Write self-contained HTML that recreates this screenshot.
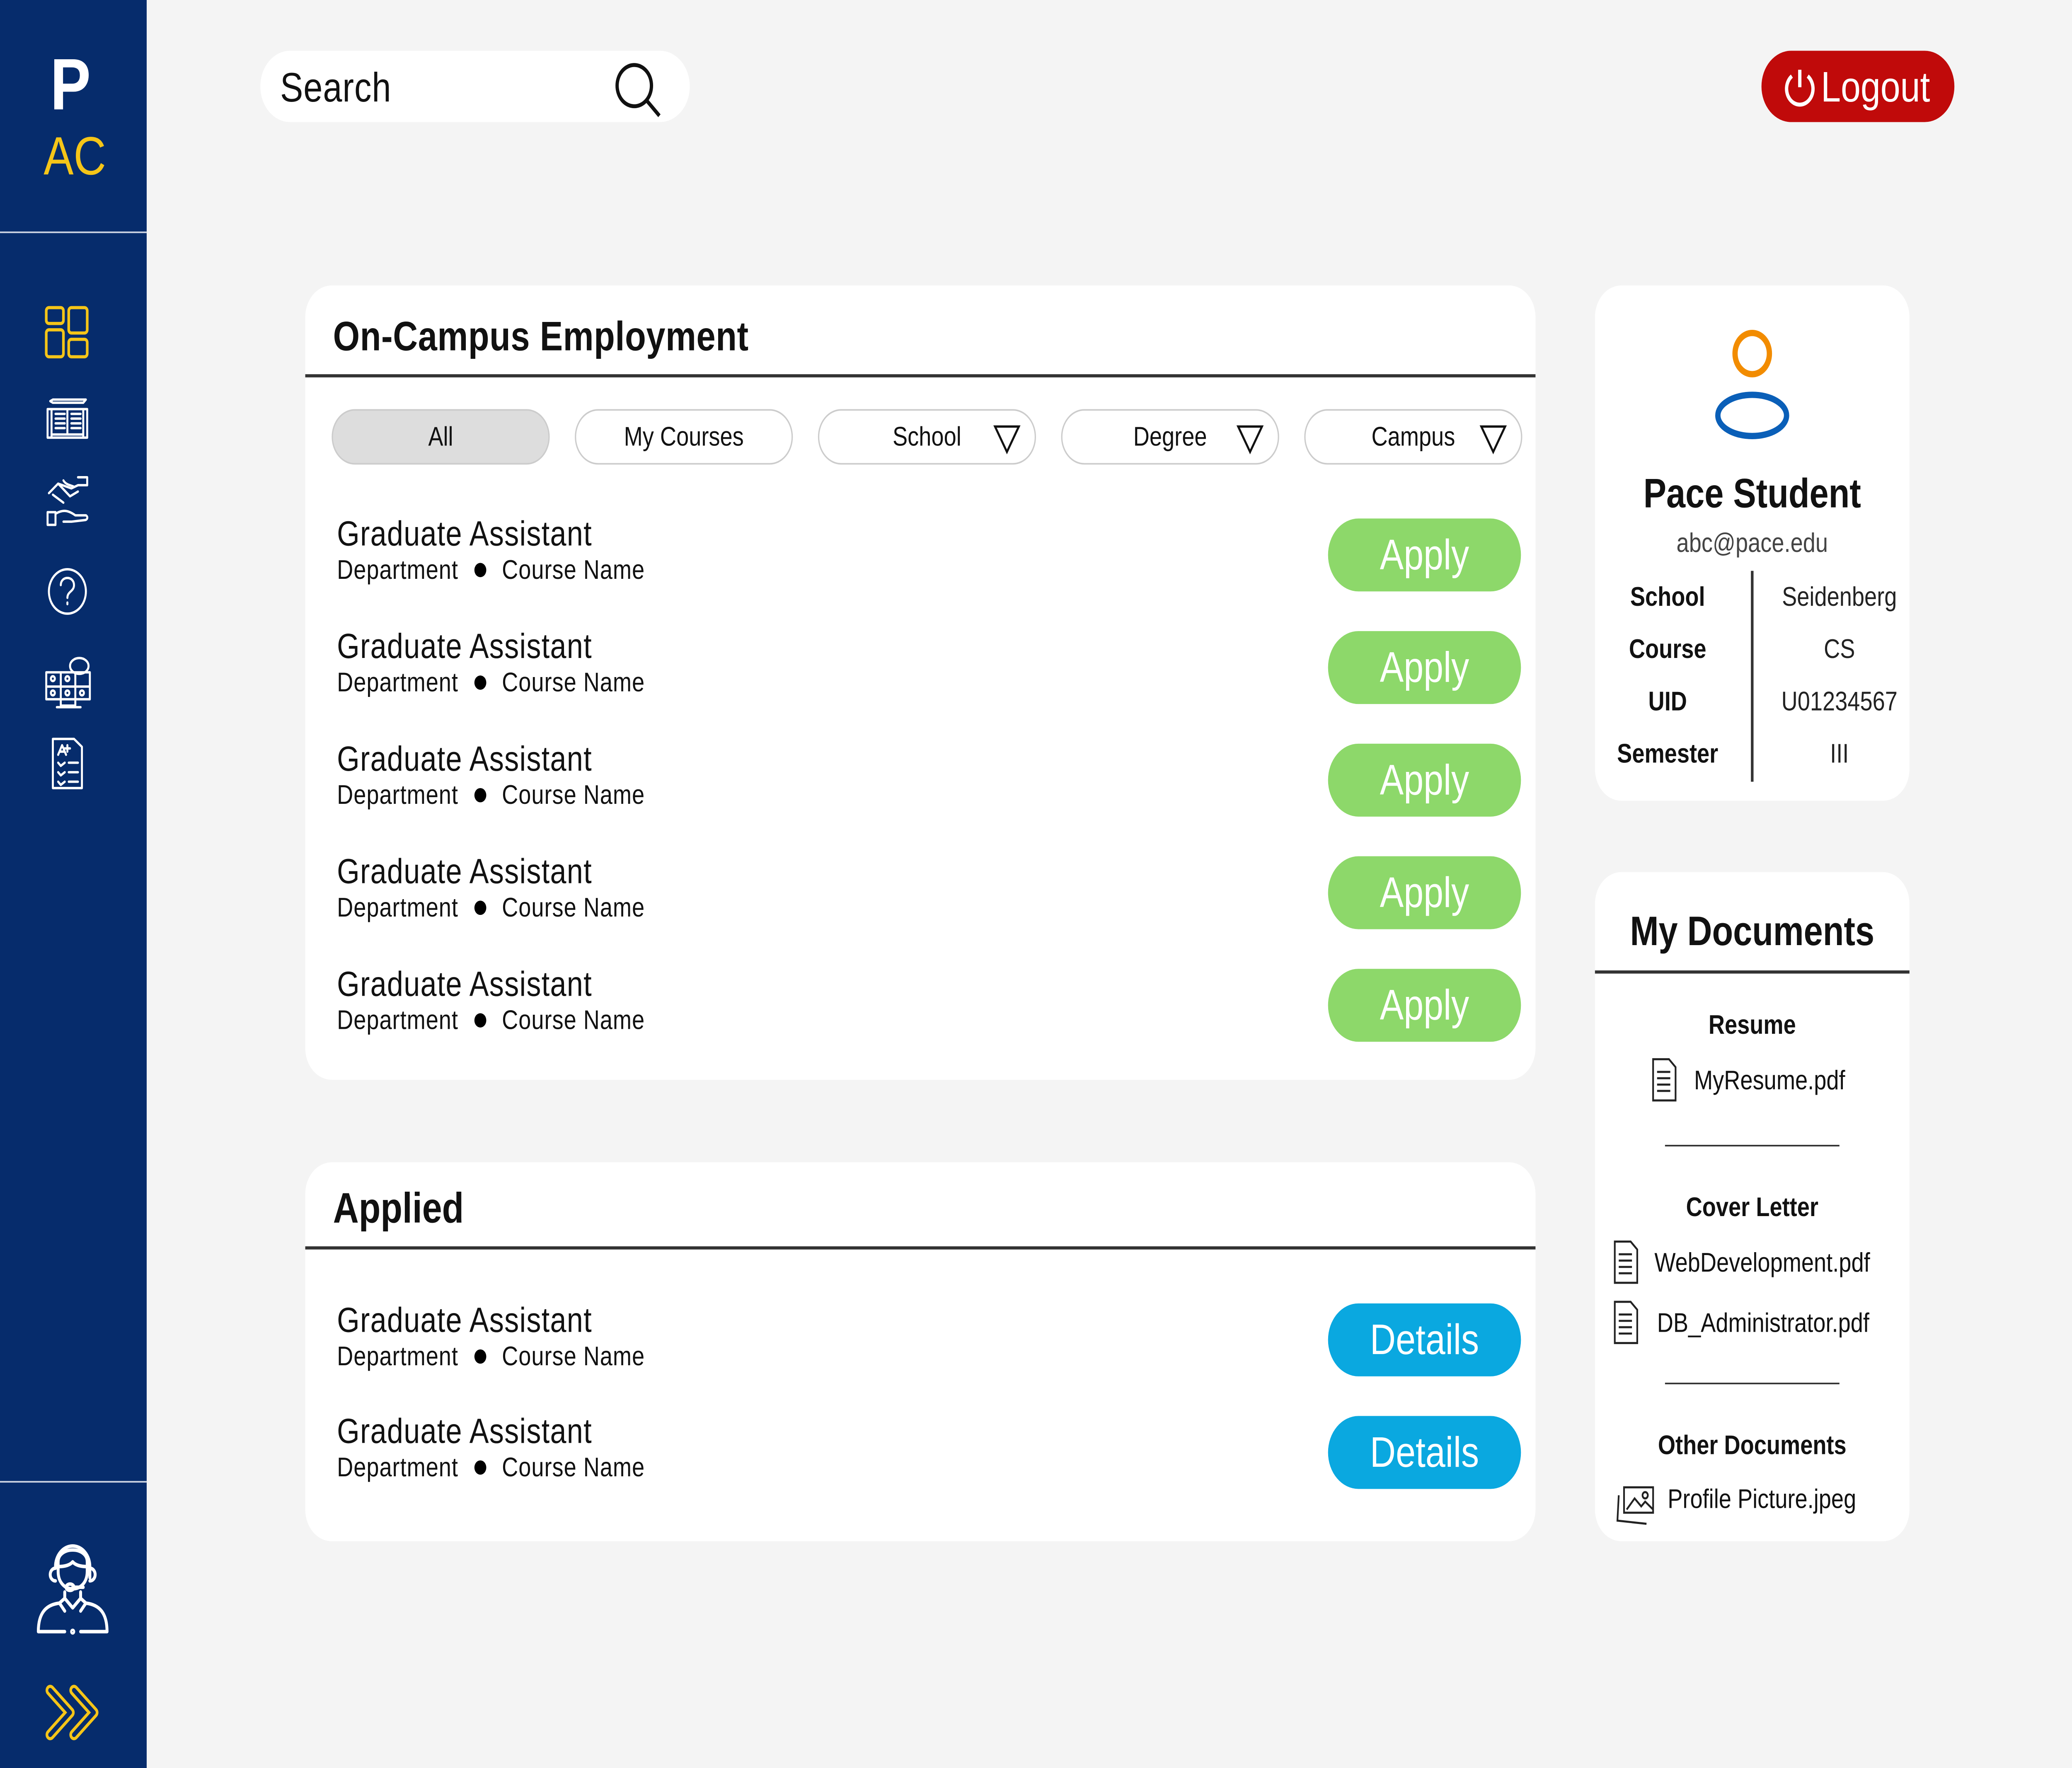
<!DOCTYPE html>
<html><head><meta charset="utf-8">
<style>
*{margin:0;padding:0;box-sizing:border-box}
html,body{width:100%;height:100%;overflow:hidden;background:#f4f4f4}
#w{position:absolute;left:0;top:0;width:1568px;height:1115px;transform:scale(3.8265);transform-origin:0 0;font-family:"Liberation Sans",Arial,sans-serif;color:#111}
.a{position:absolute}
.card{position:absolute;background:#fff;border-radius:20px}
.pill{position:absolute;width:165px;height:35px;border:1px solid #ccc;border-radius:18px;background:#fff;font-size:17px;line-height:33px;text-align:center}
.t{position:absolute;left:24px;font-size:22px;line-height:24px;letter-spacing:.4px}
.s{position:absolute;left:24px;font-size:17px;line-height:20px;letter-spacing:.3px}
.s b{display:inline-block;width:9px;height:9px;border-radius:50%;background:#000;margin:0 12px 1px 12px}
.btn{position:absolute;left:774px;width:146px;height:46px;border-radius:23px;color:#fff;font-size:27px;line-height:46px;text-align:center}
.g{background:#8dd86a}.bl{background:#0aa8e0}
.c{position:absolute;text-align:center;width:238px;left:0}
</style></head><body><div id="w">
<div class="a" style="left:0;top:0;width:111px;height:1115px;background:#062c6c"></div>
<div class="a" style="left:38px;top:28px;color:#fff;font-weight:bold;font-size:46px;line-height:50px">P</div>
<div class="a" style="left:33px;top:80px;color:#f5c518;font-size:34px;line-height:38px">AC</div>
<div class="a" style="left:0;top:146px;width:111px;height:1px;background:#cfd6e4"></div>
<div class="a" style="left:0;top:934px;width:111px;height:1px;background:#cfd6e4"></div>
<svg class="a" style="left:0;top:0" width="111" height="1115" fill="none" stroke="#f5c518" stroke-width="2" stroke-linecap="round" stroke-linejoin="round">
<rect x="35" y="194" width="13" height="10" rx="2"/><rect x="52" y="194" width="14" height="16" rx="2"/><rect x="35" y="208" width="13" height="17" rx="2"/><rect x="52" y="214" width="14" height="11" rx="2"/>
<g stroke="#fff" stroke-width="1.5">
<path d="M36 258h3v18h12 12v-18h3v18H36z M39 258v16h12v-16z M51 258h12v16H51z M42 261h7 M42 264h7 M42 267h7 M42 270h7 M54 261h7 M54 264h7 M54 267h7 M54 270h7 M40 252h25l-2 2H40l-2-1z"/>
<path d="M37 311l7-6 10 3 5-2h7v-5h-7 M44 305l9 8 6-3 M40 312l8 5 M48 303c2 3 6 3 8 4 M36 323h6v8h-6z M42 324c6-3 10-2 15 1h8c2 1 1 3-1 3l-10 1h-6"/>
<circle cx="51" cy="373" r="14"/><path d="M46 369c0-6 10-6 10 0 0 4-5 4-5 8 M51 380v1"/>
<path d="M35 424h33v17H35z M35 433h33 M46 424v17 M57 424v17 M46 441v4h11v-4 M43 446h18"/><ellipse cx="60" cy="420" rx="7" ry="5"/>
<circle cx="40" cy="428" r="1.5"/><circle cx="51" cy="428" r="1.5"/><circle cx="40" cy="437" r="1.5"/><circle cx="51" cy="437" r="1.5"/><circle cx="62" cy="437" r="1.5"/>
<path d="M40 466h16l6 5v26H40z M44 476l3-6 3 6 M45 474h4 M51 470v4 M49 472h4 M44 481l2 2 3-2 M44 487l2 2 3-2 M44 493l2 2 3-2 M52 481h7 M52 487h7 M52 493h7"/>
</g>
<g stroke="#fff" stroke-width="2.2">
<path d="M42 988a13 13 0 0 1 26 0v7 M44 985c0-10 22-10 22 0v6c0 7-5 11-11 11s-11-4-11-11z M44 988c5 0 9-1 11-3 2 2 6 3 11 3 M42 989a4 4 0 0 0 0 8 M68 989a4 4 0 0 1 0 8 M55 1001h8 M49 1004v4 M61 1004v4 M49 1008l6 6 6-6 M49 1008l-4 3 4 5 M61 1008l4 3-4 5 M45 1011c-10 1-16 6-16 18h20 M65 1011c10 1 16 6 16 18H61"/>
<ellipse cx="53" cy="1001" rx="3" ry="2"/><circle cx="55" cy="1029" r=".8"/>
</g>
<path d="M38 1066l15 14-15 14 M56 1066l15 14-15 14" stroke-width="7"/>
<path d="M38 1066l15 14-15 14 M56 1066l15 14-15 14" stroke="#062c6c" stroke-width="3"/>
</svg>
<div class="a" style="left:197px;top:32px;width:325px;height:45px;background:#fff;border-radius:23px"></div>
<div class="a" style="left:212px;top:40px;font-size:26px;line-height:30px;letter-spacing:.3px">Search</div>
<svg class="a" style="left:462px;top:36px" width="40" height="40" fill="none" stroke="#111" stroke-width="2.5"><circle cx="18" cy="18" r="13"/><path d="M27 27l10 10"/></svg>
<div class="a" style="left:1333px;top:32px;width:146px;height:45px;background:#c00a0a;border-radius:23px"></div>
<svg class="a" style="left:1348px;top:41px" width="28" height="28" fill="none" stroke="#fff" stroke-width="2.5"><path d="M8 7a10 10 0 1 0 12 0 M14 3v11"/></svg>
<div class="a" style="left:1378px;top:39px;color:#fff;font-size:27px;line-height:32px">Logout</div>

<div class="card" style="left:231px;top:180px;width:931px;height:501px">
<div class="a" style="left:21px;top:17px;font-weight:bold;font-size:26px;line-height:30px;letter-spacing:.2px">On-Campus Employment</div>
<div class="a" style="left:0;top:56px;width:931px;height:1.5px;background:#333"></div>
<div class="pill" style="left:20px;top:78px;background:#ddd">All</div>
<div class="pill" style="left:204px;top:78px">My Courses</div>
<div class="pill" style="left:388px;top:78px">School</div>
<div class="pill" style="left:572px;top:78px">Degree</div>
<div class="pill" style="left:756px;top:78px">Campus</div>
<svg class="a" style="left:0;top:0" width="931" height="120" fill="none" stroke="#111" stroke-width="1.5"><path d="M522 89h18l-9 16z M706 89h18l-9 16z M890 89h18l-9 16z"/></svg>
<div class="t" style="top:145px">Graduate Assistant</div><div class="s" style="top:170px">Department<b></b>Course Name</div><div class="btn g" style="top:147px">Apply</div>
<div class="t" style="top:216px">Graduate Assistant</div><div class="s" style="top:241px">Department<b></b>Course Name</div><div class="btn g" style="top:218px">Apply</div>
<div class="t" style="top:287px">Graduate Assistant</div><div class="s" style="top:312px">Department<b></b>Course Name</div><div class="btn g" style="top:289px">Apply</div>
<div class="t" style="top:358px">Graduate Assistant</div><div class="s" style="top:383px">Department<b></b>Course Name</div><div class="btn g" style="top:360px">Apply</div>
<div class="t" style="top:429px">Graduate Assistant</div><div class="s" style="top:454px">Department<b></b>Course Name</div><div class="btn g" style="top:431px">Apply</div>
</div>

<div class="card" style="left:231px;top:733px;width:931px;height:239px">
<div class="a" style="left:21px;top:14px;font-weight:bold;font-size:27px;line-height:30px">Applied</div>
<div class="a" style="left:0;top:53px;width:931px;height:1.5px;background:#333"></div>
<div class="t" style="top:88px">Graduate Assistant</div><div class="s" style="top:113px">Department<b></b>Course Name</div><div class="btn bl" style="top:89px">Details</div>
<div class="t" style="top:158px">Graduate Assistant</div><div class="s" style="top:183px">Department<b></b>Course Name</div><div class="btn bl" style="top:160px">Details</div>
</div>

<div class="card" style="left:1207px;top:180px;width:238px;height:325px">
<svg class="a" style="left:85px;top:25px" width="70" height="75" fill="none" stroke-width="4"><circle cx="34" cy="18" r="13" stroke="#f28c00"/><ellipse cx="34" cy="57" rx="26" ry="13" stroke="#0a5fb8"/></svg>
<div class="c" style="top:116px;font-weight:bold;font-size:26px;line-height:30px">Pace Student</div>
<div class="c" style="top:153px;font-size:17px;color:#444">abc@pace.edu</div>
<div class="a" style="left:118px;top:180px;width:1.5px;height:133px;background:#333"></div>
<div class="a" style="left:0;width:110px;text-align:center;top:180px;font-weight:bold;font-size:17px;line-height:33px">School<br>Course<br>UID<br>Semester</div>
<div class="a" style="left:128px;width:114px;text-align:center;top:180px;font-size:17px;line-height:33px;color:#222">Seidenberg<br>CS<br>U01234567<br>III</div>
</div>

<div class="card" style="left:1207px;top:550px;width:238px;height:422px">
<div class="c" style="top:22px;font-weight:bold;font-size:26px;line-height:30px">My Documents</div>
<div class="a" style="left:0;top:62px;width:238px;height:1.5px;background:#333"></div>
<div class="c" style="top:87px;font-weight:bold;font-size:17px">Resume</div>
<div class="a" style="left:75px;top:122px;font-size:17px">MyResume.pdf</div>
<div class="a" style="left:53px;top:172px;width:132px;height:1px;background:#333"></div>
<div class="c" style="top:202px;font-weight:bold;font-size:17px">Cover Letter</div>
<div class="a" style="left:45px;top:237px;font-size:17px">WebDevelopment.pdf</div>
<div class="a" style="left:47px;top:275px;font-size:17px">DB_Administrator.pdf</div>
<div class="a" style="left:53px;top:322px;width:132px;height:1px;background:#333"></div>
<div class="c" style="top:352px;font-weight:bold;font-size:17px">Other Documents</div>
<div class="a" style="left:55px;top:386px;font-size:17px">Profile Picture.jpeg</div>
<svg class="a" style="left:0;top:0" width="238" height="422" fill="none" stroke="#222" stroke-width="1.3">
<path d="M44 118h12l5 5v21H44z M47 126h10 M47 130h10 M47 134h10 M47 138h10"/>
<path d="M15 233h12l5 5v21H15z M18 241h10 M18 245h10 M18 249h10 M18 253h10"/>
<path d="M15 271h12l5 5v21H15z M18 279h10 M18 283h10 M18 287h10 M18 291h10"/>
<path d="M22 388h22v16H22z M18 393l-1 16 22 2 M24 402l6-7 5 5 3-3 6 5"/><circle cx="38" cy="393" r="2"/>
</svg>
</div>
</div>
<script>
(function(){var w=document.getElementById('w');function f(){var sx=window.innerWidth/1568,sy=window.innerHeight/1115;if(sx>0&&sy>0)w.style.transform='scale('+sx+','+sy+')';}f();window.addEventListener('resize',f);})();
</script>
</body></html>
